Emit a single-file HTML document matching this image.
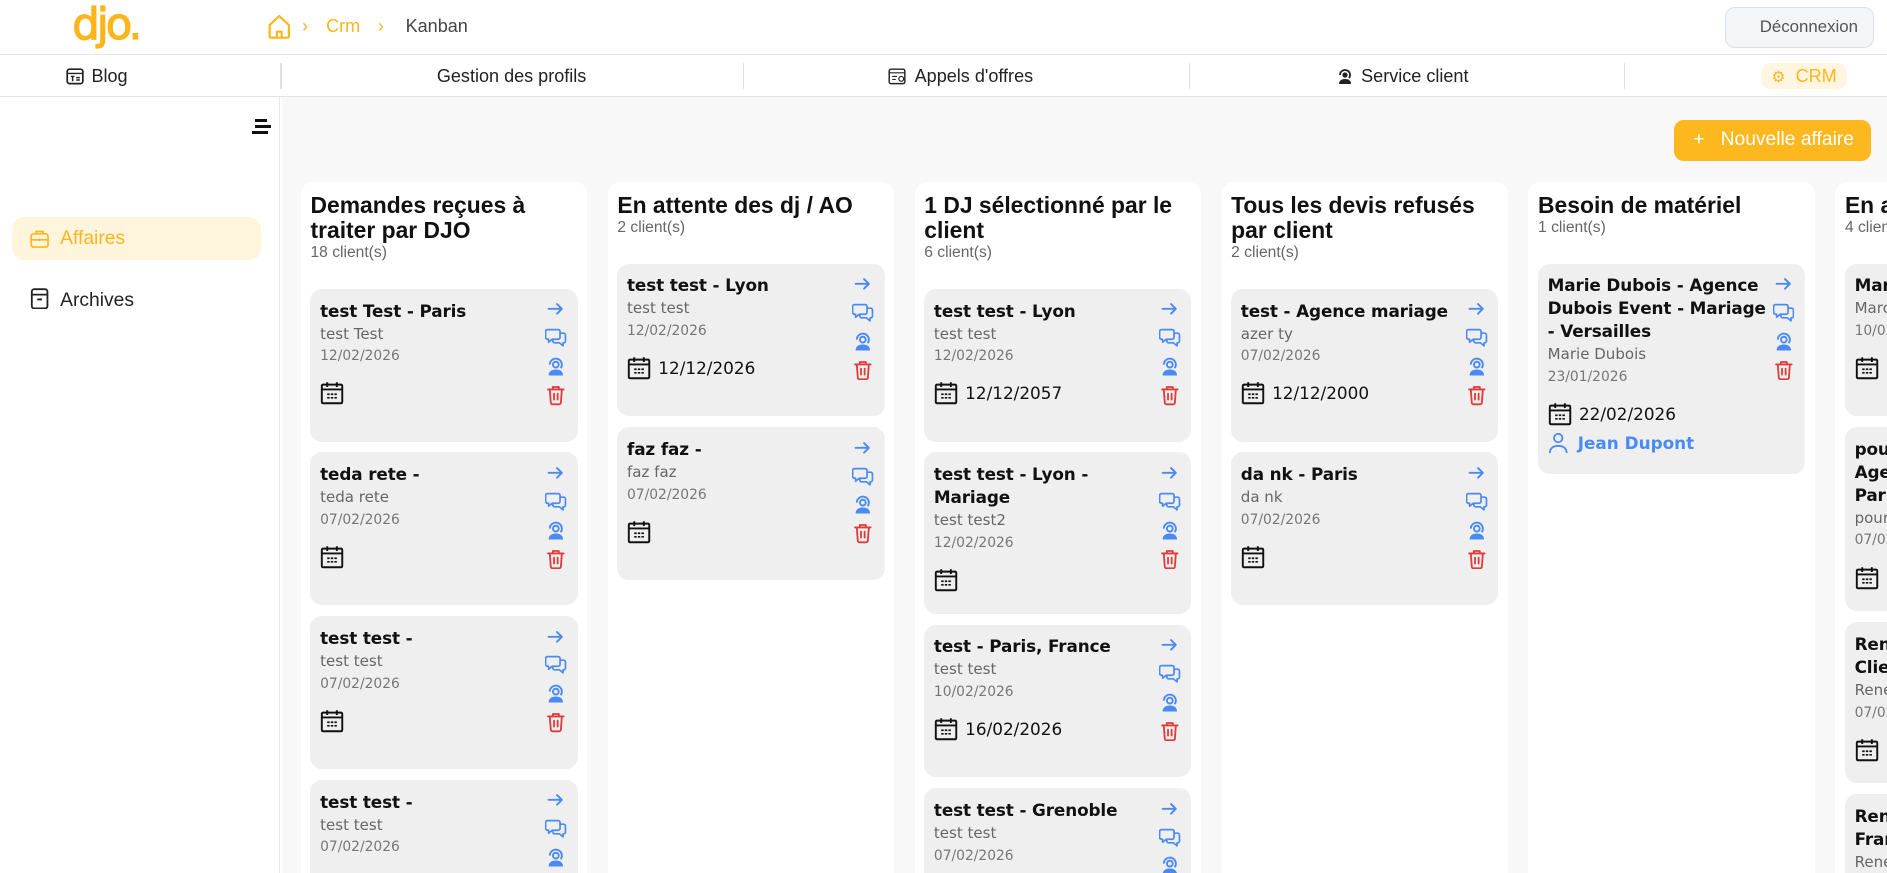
<!DOCTYPE html>
<html><head><meta charset="utf-8">
<style>
*{box-sizing:border-box;margin:0;padding:0}
html,body{width:1887px;height:873px;overflow:hidden;background:#fff}
#z{zoom:1.2035;width:1568px;height:725px;position:relative;overflow:hidden;font-family:"Liberation Sans",sans-serif;color:#111}
.hdr{position:absolute;left:0;top:0;width:1568px;height:46px;border-bottom:1px solid #e8e8e8}
.logo{position:absolute;left:60px;top:1px;font-size:36px;color:#FDB51B;letter-spacing:-2.5px;font-weight:normal;font-family:"DejaVu Sans",sans-serif;line-height:40px;-webkit-text-stroke:1px #FDB51B}
.bc{position:absolute;top:13px;font-size:15px}
.dec{position:absolute;left:1433px;top:6px;width:124px;height:34px;border:1px solid #dcdfe4;border-radius:8px;background:#f4f5f7;color:#555;font-size:14px;text-align:center;line-height:32px;padding-left:16px}
.nav{position:absolute;left:0;top:46px;width:1568px;height:35px;border-bottom:1px solid #e3e3e3;font-size:15px}
.nav .it{position:absolute;top:0;line-height:35px;color:#222;display:flex;align-items:center;gap:6px}
.sep{position:absolute;top:6px;width:1px;height:22px;background:#e0e0e0}
.side{position:absolute;left:0;top:81px;width:233px;height:644px;border-right:1px solid #e8e8e8;background:#fff}
.main{position:absolute;left:234px;top:81px;width:1334px;height:644px;background:#f8f8f8;overflow:hidden}
.btn{position:absolute;left:1157px;top:19px;width:164px;height:34px;background:#FDB71F;border-radius:8px;color:#fff;font-size:16px;line-height:34px;padding-left:16px}
.col{position:absolute;top:70px;width:238px;height:574px;overflow:hidden;background:#fff;border-radius:10px 10px 0 0;padding:9px 8px 0}
.ct{font-size:19px;font-weight:bold;line-height:21px}
.cn{font-size:13px;color:#666;line-height:16px;margin-bottom:22px}
.card{position:relative;background:#efefef;border-radius:10px;padding:9px 28px 17px 8px;min-height:127px;margin-bottom:9px;font-family:"DejaVu Sans",sans-serif}
.t{font-size:14px;font-weight:bold;line-height:19px;letter-spacing:-0.1px}
.s{font-size:12.5px;color:#666;line-height:19px}
.d{font-size:11.5px;color:#777;line-height:19px}
.cal{margin-top:10px;height:22px;display:flex;align-items:center;gap:6px;font-size:14px}
.ic{position:absolute;right:9px;width:18px;height:18px}
</style></head><body><div id="z">
<svg width="0" height="0" style="position:absolute"><defs>
<symbol id="ar" viewBox="0 0 18 18"><path d="M3 9h11M10 5l4 4-4 4" fill="none" stroke="#4a8af4" stroke-width="1.6" stroke-linecap="round" stroke-linejoin="round"/></symbol>
<symbol id="ch" viewBox="0 0 18 18"><path d="M2 3h9a1.5 1.5 0 0 1 1.5 1.5v5A1.5 1.5 0 0 1 11 11H6l-3 2.5V11H2A1.5 1.5 0 0 1 .5 9.5v-5A1.5 1.5 0 0 1 2 3zM12.5 6h3A1.5 1.5 0 0 1 17 7.5v5a1.5 1.5 0 0 1-1.5 1.5H15v2.5L12 14H8a1.5 1.5 0 0 1-1.5-1.5V11" fill="none" stroke="#4a8af4" stroke-width="1.4" stroke-linejoin="round"/></symbol>
<symbol id="pe" viewBox="0 0 18 18"><path d="M4 8a5 5 0 1 1 9 3" fill="none" stroke="#4a8af4" stroke-width="1.6"/><circle cx="9" cy="8" r="2.4" fill="none" stroke="#4a8af4" stroke-width="1.6"/><path d="M3 17c0-3.5 2.7-5 6-5s6 1.5 6 5z" fill="#4a8af4"/></symbol>
<symbol id="tr" viewBox="0 0 18 18"><path d="M2.5 4.5h13M6.5 4.5V2.5h5v2M4 4.5l.8 11a1.5 1.5 0 0 0 1.5 1.4h5.4a1.5 1.5 0 0 0 1.5-1.4l.8-11M7.5 8v5M10.5 8v5" fill="none" stroke="#e03a3a" stroke-width="1.5" stroke-linecap="round" stroke-linejoin="round"/></symbol>
<symbol id="ca" viewBox="0 0 20 20"><rect x="1.5" y="3" width="17" height="15.5" rx="1" fill="none" stroke="#111" stroke-width="1.6"/><path d="M1.5 7h17M6 1v4M14 1v4" stroke="#111" stroke-width="1.6"/><path d="M6 11h2M9 11h2M12 11h2M6 14h2M9 14h2M12 14h2" stroke="#111" stroke-width="1.4"/></symbol>
</defs></svg>

<div class="hdr">
<div class="logo">djo.</div>
<svg style="position:absolute;left:221px;top:11px" width="22" height="22" viewBox="0 0 22 22"><path d="M3 10L11 2.5 19 10v9.5a1 1 0 0 1-1 1H4a1 1 0 0 1-1-1z" fill="none" stroke="#FDB51B" stroke-width="1.8" stroke-linejoin="round"/><path d="M9 20.5v-5h4v5" fill="none" stroke="#FDB51B" stroke-width="1.8"/></svg>
<span class="bc" style="left:251px;color:#FDB51B">&#x203A;</span>
<span class="bc" style="left:271px;color:#FDB51B">Crm</span>
<span class="bc" style="left:314px;color:#FDB51B">&#x203A;</span>
<span class="bc" style="left:337px;color:#444">Kanban</span>
<div class="dec">Déconnexion</div>
</div>

<div class="nav">
<div class="it" style="left:55px"><svg width="15" height="14" viewBox="0 0 15 14"><rect x="1" y="1" width="13" height="12" rx="2" fill="none" stroke="#222" stroke-width="1.4"/><path d="M1 4.5h13M4 7h3M5.5 7v4M8.5 8h3M8.5 10h3" stroke="#222" stroke-width="1.2"/></svg>Blog</div>
<div class="sep" style="left:233px"></div>
<div class="it" style="left:363px">Gestion des profils</div>
<div class="sep" style="left:617px"></div>
<div class="it" style="left:738px"><svg width="16" height="14" viewBox="0 0 16 14"><rect x="1" y="1" width="13" height="12" rx="1.5" fill="none" stroke="#222" stroke-width="1.2"/><path d="M1 4h13M3.5 7h4M3.5 9.5h3" stroke="#222" stroke-width="1"/><circle cx="11" cy="9" r="2" fill="none" stroke="#222"/></svg>Appels d'offres</div>
<div class="sep" style="left:988px"></div>
<div class="it" style="left:1110px"><svg width="15" height="15" viewBox="0 0 18 18"><path d="M4 8a5 5 0 1 1 9 3" fill="none" stroke="#222" stroke-width="1.8"/><circle cx="9" cy="8" r="2.6" fill="#222"/><path d="M3 17c0-3.5 2.7-5 6-5s6 1.5 6 5z" fill="#222"/></svg>Service client</div>
<div class="sep" style="left:1349px"></div>
<div style="position:absolute;left:1463px;top:6px;width:72px;height:22px;background:#fff5e0;border-radius:8px;color:#FDB51B;font-size:15px;line-height:22px;padding-left:9px"><span style="font-size:13px">⚙</span> &nbsp;CRM</div>
</div>

<div class="side">
<div style="position:absolute;left:209px;top:18px;width:16px"><div style="height:2px;background:#111;width:10px;margin-left:3px"></div><div style="height:2px;background:#111;margin-top:3px;width:13px;margin-left:3px"></div><div style="height:2px;background:#111;margin-top:3px;width:14px"></div></div>
<div style="position:absolute;left:10px;top:99px;width:207px;height:36px;background:#fff4dc;border-radius:10px;color:#FDB51B;font-size:16px;line-height:36px;padding-left:40px">Affaires
<svg style="position:absolute;left:15px;top:10px" width="16" height="16" viewBox="0 0 16 16"><rect x="1" y="4" width="14" height="11" rx="2" fill="none" stroke="#FDB51B" stroke-width="1.4"/><path d="M5 4V2h6v2M1 9h14M8 8v2" stroke="#FDB51B" stroke-width="1.4" fill="none"/></svg></div>
<div style="position:absolute;left:50px;top:160px;font-size:16px;color:#222">Archives</div>
<svg style="position:absolute;left:25px;top:158px" width="16" height="18" viewBox="0 0 16 18"><rect x="1.5" y="1" width="13" height="16" rx="2" fill="none" stroke="#222" stroke-width="1.5"/><path d="M1.5 5.5h13M6 9.5h4" stroke="#222" stroke-width="1.5"/></svg>
</div>

<div class="main">
<div class="btn">+ &nbsp;&nbsp;Nouvelle affaire</div>

<div class="col" style="left:16px">
<div class="ct">Demandes reçues à traiter par DJO</div><div class="cn">18 client(s)</div>
<div class="card"><div class="t">test Test - Paris</div><div class="s">test Test</div><div class="d">12/02/2026</div><div class="cal"><svg width="20" height="20"><use href="#ca"/></svg></div><svg class="ic" style="top:8px"><use href="#ar"/></svg><svg class="ic" style="top:31px"><use href="#ch"/></svg><svg class="ic" style="top:55px"><use href="#pe"/></svg><svg class="ic" style="top:79px"><use href="#tr"/></svg></div>
<div class="card"><div class="t">teda rete -</div><div class="s">teda rete</div><div class="d">07/02/2026</div><div class="cal"><svg width="20" height="20"><use href="#ca"/></svg></div><svg class="ic" style="top:8px"><use href="#ar"/></svg><svg class="ic" style="top:31px"><use href="#ch"/></svg><svg class="ic" style="top:55px"><use href="#pe"/></svg><svg class="ic" style="top:79px"><use href="#tr"/></svg></div>
<div class="card"><div class="t">test test -</div><div class="s">test test</div><div class="d">07/02/2026</div><div class="cal"><svg width="20" height="20"><use href="#ca"/></svg></div><svg class="ic" style="top:8px"><use href="#ar"/></svg><svg class="ic" style="top:31px"><use href="#ch"/></svg><svg class="ic" style="top:55px"><use href="#pe"/></svg><svg class="ic" style="top:79px"><use href="#tr"/></svg></div>
<div class="card"><div class="t">test test -</div><div class="s">test test</div><div class="d">07/02/2026</div><div class="cal"><svg width="20" height="20"><use href="#ca"/></svg></div><svg class="ic" style="top:8px"><use href="#ar"/></svg><svg class="ic" style="top:31px"><use href="#ch"/></svg><svg class="ic" style="top:55px"><use href="#pe"/></svg><svg class="ic" style="top:79px"><use href="#tr"/></svg></div>
</div>

<div class="col" style="left:271px">
<div class="ct">En attente des dj / AO</div><div class="cn">2 client(s)</div>
<div class="card"><div class="t">test test - Lyon</div><div class="s">test test</div><div class="d">12/02/2026</div><div class="cal"><svg width="20" height="20"><use href="#ca"/></svg>12/12/2026</div><svg class="ic" style="top:8px"><use href="#ar"/></svg><svg class="ic" style="top:31px"><use href="#ch"/></svg><svg class="ic" style="top:55px"><use href="#pe"/></svg><svg class="ic" style="top:79px"><use href="#tr"/></svg></div>
<div class="card"><div class="t">faz faz -</div><div class="s">faz faz</div><div class="d">07/02/2026</div><div class="cal"><svg width="20" height="20"><use href="#ca"/></svg></div><svg class="ic" style="top:8px"><use href="#ar"/></svg><svg class="ic" style="top:31px"><use href="#ch"/></svg><svg class="ic" style="top:55px"><use href="#pe"/></svg><svg class="ic" style="top:79px"><use href="#tr"/></svg></div>
</div>

<div class="col" style="left:526px">
<div class="ct">1 DJ sélectionné par le client</div><div class="cn">6 client(s)</div>
<div class="card"><div class="t">test test - Lyon</div><div class="s">test test</div><div class="d">12/02/2026</div><div class="cal"><svg width="20" height="20"><use href="#ca"/></svg>12/12/2057</div><svg class="ic" style="top:8px"><use href="#ar"/></svg><svg class="ic" style="top:31px"><use href="#ch"/></svg><svg class="ic" style="top:55px"><use href="#pe"/></svg><svg class="ic" style="top:79px"><use href="#tr"/></svg></div>
<div class="card"><div class="t">test test - Lyon -<br>Mariage</div><div class="s">test test2</div><div class="d">12/02/2026</div><div class="cal"><svg width="20" height="20"><use href="#ca"/></svg></div><svg class="ic" style="top:8px"><use href="#ar"/></svg><svg class="ic" style="top:31px"><use href="#ch"/></svg><svg class="ic" style="top:55px"><use href="#pe"/></svg><svg class="ic" style="top:79px"><use href="#tr"/></svg></div>
<div class="card"><div class="t">test - Paris, France</div><div class="s">test test</div><div class="d">10/02/2026</div><div class="cal"><svg width="20" height="20"><use href="#ca"/></svg>16/02/2026</div><svg class="ic" style="top:8px"><use href="#ar"/></svg><svg class="ic" style="top:31px"><use href="#ch"/></svg><svg class="ic" style="top:55px"><use href="#pe"/></svg><svg class="ic" style="top:79px"><use href="#tr"/></svg></div>
<div class="card"><div class="t">test test - Grenoble</div><div class="s">test test</div><div class="d">07/02/2026</div><div class="cal"><svg width="20" height="20"><use href="#ca"/></svg></div><svg class="ic" style="top:8px"><use href="#ar"/></svg><svg class="ic" style="top:31px"><use href="#ch"/></svg><svg class="ic" style="top:55px"><use href="#pe"/></svg><svg class="ic" style="top:79px"><use href="#tr"/></svg></div>
</div>

<div class="col" style="left:781px">
<div class="ct">Tous les devis refusés par client</div><div class="cn">2 client(s)</div>
<div class="card"><div class="t">test - Agence mariage</div><div class="s">azer ty</div><div class="d">07/02/2026</div><div class="cal"><svg width="20" height="20"><use href="#ca"/></svg>12/12/2000</div><svg class="ic" style="top:8px"><use href="#ar"/></svg><svg class="ic" style="top:31px"><use href="#ch"/></svg><svg class="ic" style="top:55px"><use href="#pe"/></svg><svg class="ic" style="top:79px"><use href="#tr"/></svg></div>
<div class="card"><div class="t">da nk - Paris</div><div class="s">da nk</div><div class="d">07/02/2026</div><div class="cal"><svg width="20" height="20"><use href="#ca"/></svg></div><svg class="ic" style="top:8px"><use href="#ar"/></svg><svg class="ic" style="top:31px"><use href="#ch"/></svg><svg class="ic" style="top:55px"><use href="#pe"/></svg><svg class="ic" style="top:79px"><use href="#tr"/></svg></div>
</div>

<div class="col" style="left:1036px">
<div class="ct">Besoin de matériel</div><div class="cn">1 client(s)</div>
<div class="card"><div class="t">Marie Dubois - Agence<br>Dubois Event - Mariage<br>- Versailles</div><div class="s">Marie Dubois</div><div class="d">23/01/2026</div><div class="cal"><svg width="20" height="20"><use href="#ca"/></svg>22/02/2026</div>
<div style="display:flex;align-items:center;gap:8px;margin-top:4px;color:#4a8af4;font-weight:bold;font-size:14px"><svg width="17" height="18" viewBox="0 0 17 18"><circle cx="8.5" cy="5" r="3.5" fill="none" stroke="#4a8af4" stroke-width="1.5"/><path d="M1.5 17.5c0-4 3-6 7-6s7 2 7 6" fill="none" stroke="#4a8af4" stroke-width="1.5"/></svg>Jean Dupont</div>
<svg class="ic" style="top:8px"><use href="#ar"/></svg><svg class="ic" style="top:31px"><use href="#ch"/></svg><svg class="ic" style="top:55px"><use href="#pe"/></svg><svg class="ic" style="top:79px"><use href="#tr"/></svg></div>
</div>

<div class="col" style="left:1291px">
<div class="ct" style="white-space:nowrap">En attente</div><div class="cn">4 client(s)</div>
<div class="card"><div class="t">Marc</div><div class="s">Marc</div><div class="d">10/02/2026</div><div class="cal"><svg width="20" height="20"><use href="#ca"/></svg></div></div>
<div class="card"><div class="t">pour<br>Agence<br>Paris</div><div class="s">pour</div><div class="d">07/02/2026</div><div class="cal"><svg width="20" height="20"><use href="#ca"/></svg></div></div>
<div class="card"><div class="t">Rene<br>Client</div><div class="s">Rene</div><div class="d">07/02/2026</div><div class="cal"><svg width="20" height="20"><use href="#ca"/></svg></div></div>
<div class="card"><div class="t">Rene<br>France</div><div class="s">Rene</div></div>
</div>
</div>
</div></body></html>
